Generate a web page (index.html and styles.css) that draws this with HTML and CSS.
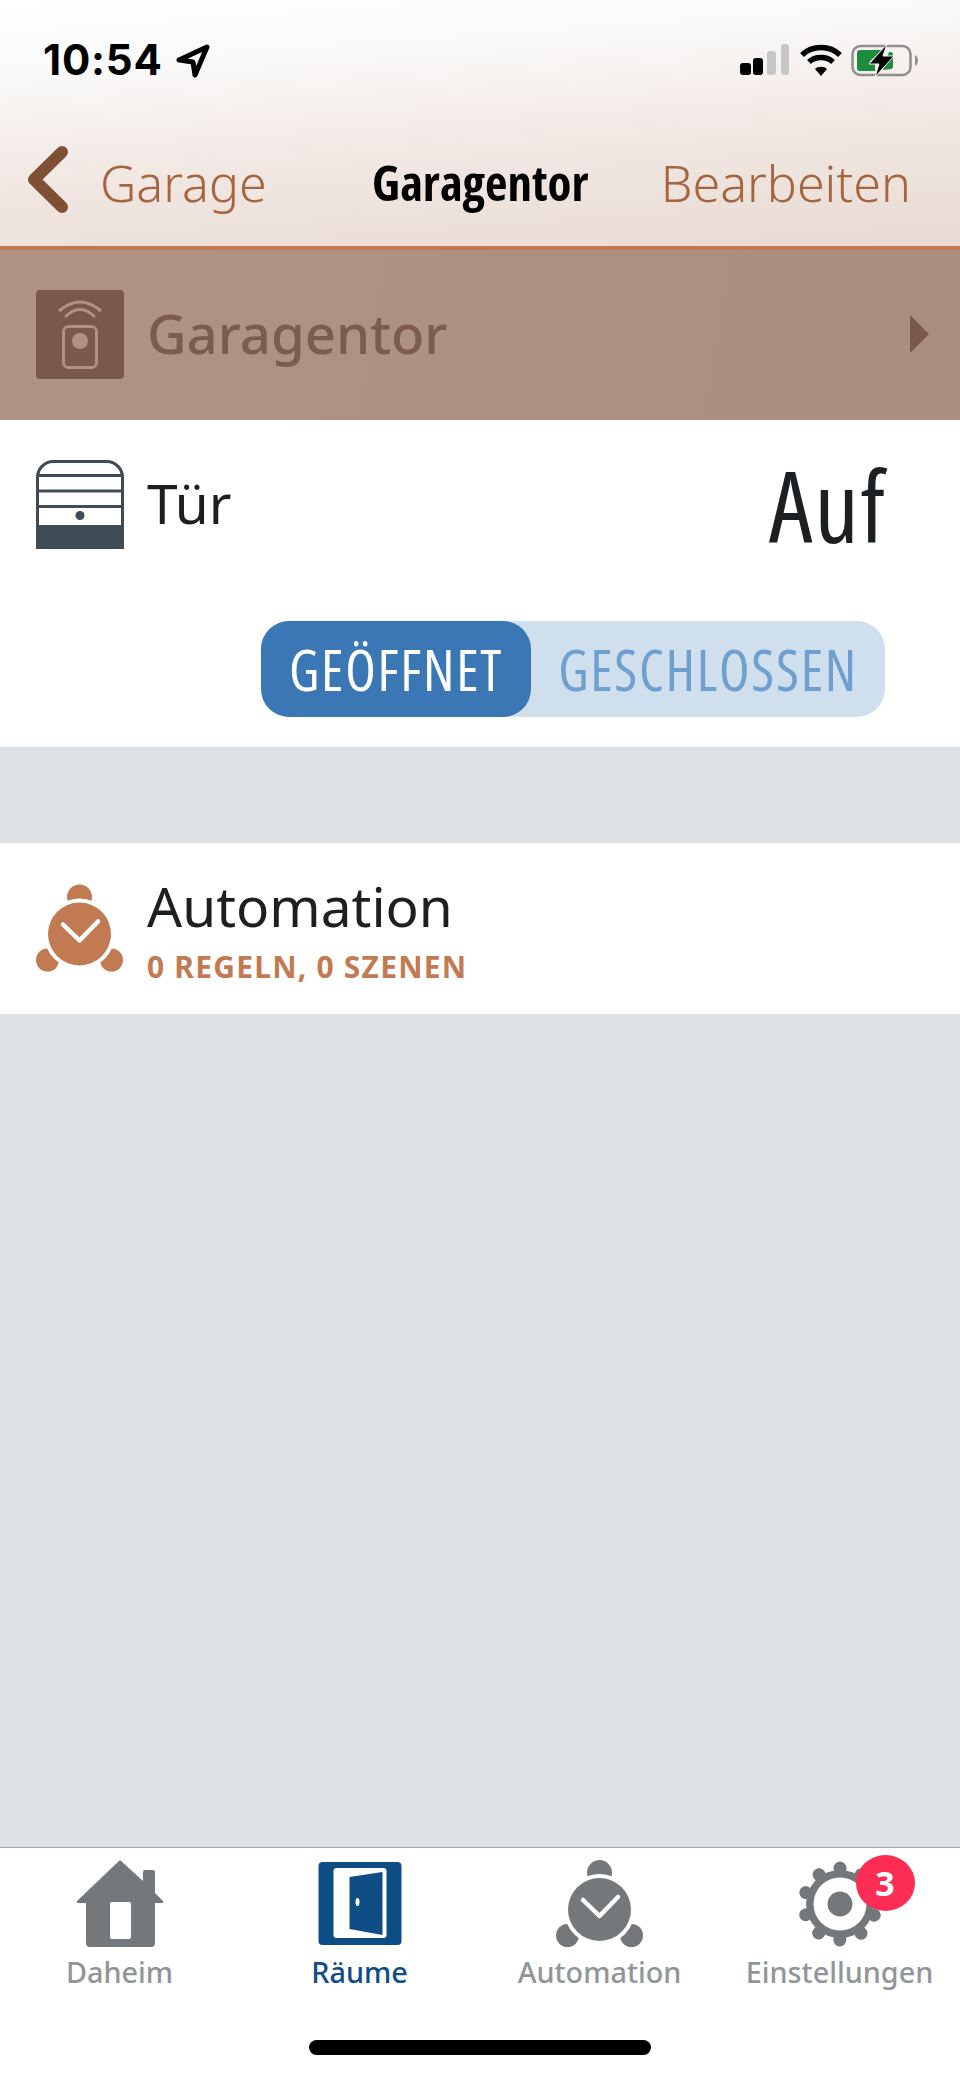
FILE: index.html
```html
<!DOCTYPE html>
<html lang="de">
<head>
    <meta charset="UTF-8">
    <meta name="viewport" content="width=device-width, initial-scale=1.0">
    <title>Garagentor</title>
    <link rel="stylesheet" href="styles.css">
</head>
<body>
    <div class="app">
        <header class="top">
            <div class="status">
                <div class="status-left">
                    <span class="time">10:54</span>
                    <svg class="loc" viewBox="0 0 34 34"><path d="M31 3 3 16l14 2 2 13z" fill="none" stroke="#000" stroke-width="5" stroke-linejoin="round"/></svg>
                </div>
                <div class="status-right">
                    <svg class="signal" viewBox="0 0 50 31">
                        <rect x="0" y="19" width="11" height="12" rx="3" fill="#000"/>
                        <rect x="13" y="14" width="10" height="17" rx="3" fill="#000"/>
                        <rect x="27" y="7" width="9" height="24" rx="3" fill="#c6c6c6"/>
                        <rect x="41" y="0" width="8" height="31" rx="3" fill="#c6c6c6"/>
                    </svg>
                    <svg class="wifi" viewBox="0 0 42 32">
                        <path d="M2 11C12 1 30 1 40 11" fill="none" stroke="#000" stroke-width="5.5"/>
                        <path d="M9 18C15 12 27 12 33 18" fill="none" stroke="#000" stroke-width="5.5"/>
                        <path d="M15 25C18 22 24 22 27 25L21 32z" fill="#000"/>
                    </svg>
                    <svg class="battery" viewBox="0 0 68 33">
                        <rect x="1.5" y="2" width="58" height="29" rx="8" fill="none" stroke="#8f8f8f" stroke-width="2.5"/>
                        <path d="M64 11c2 1 3 3 3 5.500s-1 4.500-3 5.500z" fill="#8f8f8f"/>
                        <path d="M9 6h22L18 18h6v9H9a3 3 0 0 1-3-3V9a3 3 0 0 1 3-3z" fill="#1f8b3c"/>
                        <path d="M38 8h2a3 3 0 0 1 2 3v12a3 3 0 0 1-2 2l-8 1z" fill="#1f8b3c"/>
                        <path d="M36 0 18 20h10l-4 13 19-21H32z" fill="#000" stroke="#f6f4f3" stroke-width="1"/>
                    </svg>
                </div>
            </div>
            <nav class="nav">
                <div class="nav-back">
                    <svg class="chevron" viewBox="0 0 40 68"><path d="M34 6 6 33.500 34 61" fill="none" stroke="#7e5034" stroke-width="12" stroke-linecap="round" stroke-linejoin="round"/></svg>
                    <span class="nav-text">Garage</span>
                </div>
                <div class="nav-title nav-text">Garagentor</div>
                <div class="nav-edit nav-text">Bearbeiten</div>
            </nav>
        </header>

        <div class="device">
            <svg class="icon" viewBox="0 0 88 89">
                <rect width="88" height="89" rx="4" fill="#78594b"/>
                <path d="M23 21Q44 3 65 21M29 27Q44 12 59 27" fill="none" stroke="#ae9282" stroke-width="3"/>
                <rect x="27.500" y="36.500" width="33" height="41" rx="5" fill="none" stroke="#ae9282" stroke-width="3"/>
                <circle cx="44" cy="51" r="8" fill="#ae9282"/>
            </svg>
            <span class="device-name">Garagentor</span>
            <div class="arrow"></div>
        </div>

        <section class="door">
            <div class="door-row">
                <svg class="icon" viewBox="0 0 88 89">
                    <path d="M1.500 66V18A16 16 0 0 1 17.500 1.500H70.500A16 16 0 0 1 86.500 18V66" fill="none" stroke="#3f4c55" stroke-width="3"/>
                    <path d="M2 15.500H86M2 31H86M2 46.500H86" stroke="#3f4c55" stroke-width="3"/>
                    <circle cx="44" cy="55.500" r="4.500" fill="#3f4c55"/>
                    <rect y="65" width="88" height="24" fill="#3f4c55"/>
                </svg>
                <span class="row-label">Tür</span>
                <span class="door-state">Auf</span>
            </div>
            <div class="toggle">
                <div class="toggle-on">GEÖFFNET</div>
                <div class="toggle-off">GESCHLOSSEN</div>
            </div>
        </section>

        <section class="auto">
            <svg class="icon alarm" viewBox="0 0 88 88">
                <circle cx="43.500" cy="12.500" r="12.500"/>
                <circle cx="11.500" cy="75.500" r="11.500"/>
                <circle cx="75.500" cy="75.500" r="11.500"/>
                <circle class="gap" cx="43.500" cy="49.500" r="35.500"/>
                <circle cx="43.500" cy="49.500" r="31.500"/>
                <path class="tick" d="M27 40 43.500 56 62 37"/>
            </svg>
            <div>
                <div class="row-label auto-title">Automation</div>
                <div class="auto-sub">0 REGELN, 0 SZENEN</div>
            </div>
        </section>

        <div class="spacer"></div>

        <footer class="tabs">
            <div class="tab">
                <svg class="tab-icon" viewBox="0 0 86 88">
                    <path d="M43 0 66 21V12q0-2 2-2h8q2 0 2 2V33l8 8q1 2-1 2H78V83q0 4-4 4H13q-4 0-4-4V43H1q-2 0-1-2z" fill="#75787a"/>
                    <rect x="33" y="42" width="21" height="37" rx="2" fill="#fff"/>
                </svg>
                <span>Daheim</span>
            </div>
            <div class="tab active">
                <svg class="tab-icon" viewBox="0 0 83 88">
                    <rect y="2" width="83" height="83" rx="4" fill="#0f4d85"/>
                    <rect x="15" y="8" width="53" height="70" rx="3" fill="#fff"/>
                    <path d="M31 17 64 12V75L31 69z" fill="#0f4d85"/>
                    <ellipse cx="39" cy="42" rx="2" ry="4" fill="#fff"/>
                </svg>
                <span>Räume</span>
            </div>
            <div class="tab">
                <svg class="tab-icon alarm grey" viewBox="0 0 88 88">
                    <circle cx="43.500" cy="12.500" r="12.500"/>
                    <circle cx="11.500" cy="75.500" r="11.500"/>
                    <circle cx="75.500" cy="75.500" r="11.500"/>
                    <circle class="gap" cx="43.500" cy="49.500" r="35.500"/>
                    <circle cx="43.500" cy="49.500" r="31.500"/>
                    <path class="tick" d="M27 40 43.500 56 62 37"/>
                </svg>
                <span>Automation</span>
            </div>
            <div class="tab">
                <div class="gear-wrap">
                    <svg class="tab-icon" viewBox="0 0 88 88">
                        <circle cx="44" cy="44" r="34" fill="#75787a"/>
                        <circle cx="44" cy="44" r="36" fill="none" stroke="#75787a" stroke-width="13" stroke-linecap="round" stroke-dasharray="0.01 22.61" transform="rotate(-90 44 44)"/>
                        <circle cx="44" cy="44" r="26.500" fill="#fff"/>
                        <circle cx="44" cy="44" r="12.500" fill="#75787a"/>
                    </svg>
                    <div class="badge">3</div>
                </div>
                <span>Einstellungen</span>
            </div>
            <div class="home-bar"></div>
        </footer>
    </div>
</body>
</html>
```

FILE: styles.css
```css
* {
    box-sizing: border-box;
}
html, body {
    margin: 0;
    padding: 0;
}
body {
    font-family: "Noto Sans", sans-serif;
    background: #dde1e4;
    color: #1c2023;
}
.app {
    width: 960px;
    height: 2079px;
    display: flex;
    flex-direction: column;
    overflow: hidden;
}
.top {
    height: 250px;
    background: linear-gradient(176deg, #ffffff 0%, #fafafa 22%, #f1e6e1 62%, #e8dad5 100%);
    border-bottom: 4px solid #c27a52;
}
.status {
    height: 117px;
    display: flex;
    justify-content: space-between;
    padding: 44px 41px 0 43px;
}
.status-left {
    display: flex;
    align-items: flex-start;
}
.time {
    font-family: Inter, sans-serif;
    font-weight: 700;
    font-size: 42px;
    letter-spacing: 0.8px;
    line-height: 32px;
    color: #000;
}
.loc {
    width: 34px;
    height: 34px;
    margin-left: 13px;
}
.status-right {
    display: flex;
    align-items: flex-start;
}
.signal {
    width: 50px;
    height: 31px;
}
.wifi {
    width: 42px;
    height: 32px;
    margin-left: 10px;
}
.battery {
    width: 68px;
    height: 33px;
    margin-left: 9px;
}
.nav {
    height: 126px;
    display: grid;
    grid-template-columns: 344px auto 1fr;
    align-items: center;
    padding: 0 49px 0 28px;
    font-size: 50.200px;
    font-weight: 300;
    color: #a4663f;
}
.nav-text {
    padding-top: 4px;
}
.nav-back {
    display: flex;
    align-items: center;
}
.chevron {
    width: 40px;
    height: 68px;
    margin-right: 32px;
}
.nav-title {
    font-family: "Open Sans", sans-serif;
    font-stretch: condensed;
    font-weight: 700;
    font-size: 49px;
    color: #000;
}
.nav-edit {
    text-align: right;
}
.device {
    height: 170px;
    background: linear-gradient(100deg, #af9383, #aa8e80);
    display: flex;
    align-items: center;
    padding: 0 31px 2px 36px;
    color: #7b5c4d;
}
.icon {
    width: 88px;
    height: 89px;
    flex: none;
}
.device-name {
    font-size: 54.500px;
    font-weight: 500;
    margin: 0 0 3px 23px;
    flex: 1;
}
.arrow {
    width: 0;
    height: 0;
    border-left: 19px solid #78594b;
    border-top: 19px solid transparent;
    border-bottom: 19px solid transparent;
}
.door {
    height: 327px;
    background: #fff;
    padding: 40px 75px 0 36px;
}
.door-row {
    display: flex;
    align-items: flex-start;
    height: 161px;
}
.row-label {
    font-size: 55px;
    font-weight: 400;
    line-height: 70px;
}
.door-row .row-label {
    margin-left: 23px;
    margin-top: 8px;
    flex: 1;
}
.door-state {
    font-family: "Open Sans", sans-serif;
    font-stretch: condensed;
    font-size: 98px;
    letter-spacing: 2px;
    line-height: 100px;
    margin: -5px -2px 0 0;
}
.toggle {
    width: 624px;
    height: 96px;
    margin-left: auto;
    display: flex;
    background: #d0dfee;
    border-radius: 28px;
    font-family: "Open Sans", sans-serif;
    font-stretch: condensed;
    font-size: 56px;
    letter-spacing: 1.700px;
    line-height: 96px;
    text-align: center;
}
.toggle-on {
    width: 270px;
    background: #3a77b4;
    color: #fff;
    border-radius: 28px;
}
.toggle-off {
    flex: 1;
    color: #6f9fcc;
}
.auto {
    height: 171px;
    margin-top: 96px;
    background: #fff;
    display: flex;
    align-items: center;
    gap: 23px;
    padding-left: 36px;
}
.alarm {
    fill: #c27a52;
}
.alarm .gap {
    fill: #fff;
}
.alarm .tick {
    fill: none;
    stroke: #fff;
    stroke-width: 4.500px;
    stroke-linecap: round;
    stroke-linejoin: round;
}
.alarm.grey {
    fill: #75787a;
}
.auto-sub {
    margin-top: 7px;
    font-size: 30px;
    font-weight: 700;
    letter-spacing: 1.200px;
    line-height: 38px;
    color: #c27a52;
}
.spacer {
    flex: 1;
}
.tabs {
    height: 232px;
    position: relative;
    background: #fff;
    border-top: 1px solid #a6a9ab;
    display: grid;
    grid-template-columns: repeat(4, 240px);
    align-content: start;
    padding-top: 12px;
}
.tab {
    display: flex;
    flex-direction: column;
    align-items: center;
    padding-right: 1px;
    font-size: 28.800px;
    font-weight: 500;
    line-height: 40px;
    color: #929598;
}
.tab span {
    margin-top: 4px;
}
.tab.active {
    color: #0f4d85;
}
.tab-icon {
    display: block;
    width: 88px;
    height: 88px;
}
.gear-wrap {
    position: relative;
}
.badge {
    position: absolute;
    top: -5px;
    right: -31px;
    width: 59px;
    height: 56px;
    border-radius: 50%;
    background: #fe2d55;
    color: #fff;
    font-size: 34px;
    font-weight: 700;
    line-height: 56px;
    text-align: center;
}
.home-bar {
    position: absolute;
    left: 309px;
    top: 192px;
    width: 342px;
    height: 15px;
    border-radius: 8px;
    background: #000;
}
```
